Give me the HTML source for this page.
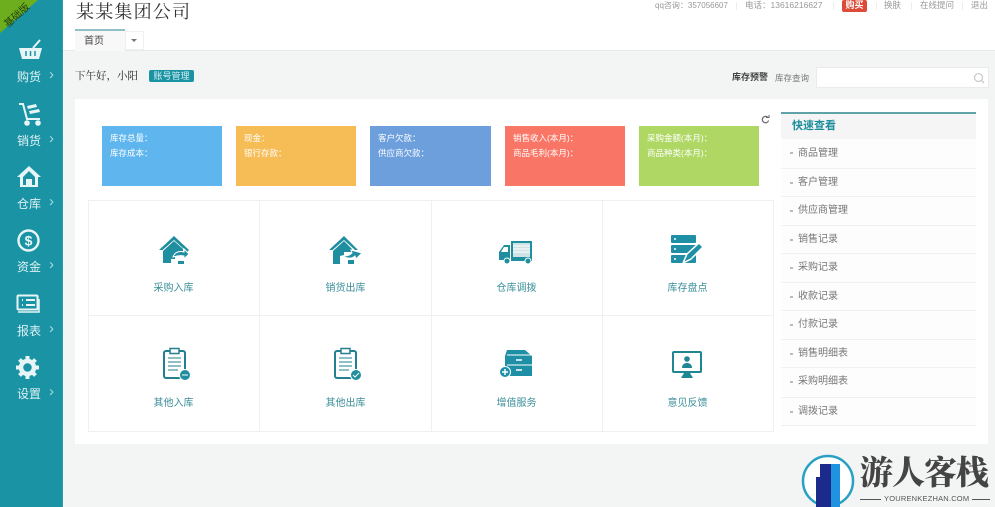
<!DOCTYPE html>
<html><head><meta charset="utf-8"><style>
*{box-sizing:border-box}
html,body{margin:0;padding:0}
body{width:995px;height:507px;position:relative;overflow:hidden;background:#f3f4f4;font-family:"Liberation Sans","Noto Sans CJK SC",sans-serif;font-size:10px;color:#666}
.a{position:absolute;white-space:nowrap}
#side{left:0;top:0;width:63px;height:507px;background:#1a94a5;border-right:1px solid #2a9cae}
.nav{color:#dff1f4;font-size:12px;left:0;width:63px}
.nav b{position:absolute;left:17px;top:-1px;font-weight:normal}
.nav i{position:absolute;left:49px;top:-3px;font-style:normal;font-size:15px;color:#a9d9df}
.card{position:absolute;top:126px;height:60px;color:#fff;font-size:8.5px;line-height:15px;padding:5px 0 0 8px}
.ln{position:absolute;background:#f0f0f0}
.lbl{position:absolute;width:171px;text-align:center;font-size:10px;color:#3a8e99}
.q{position:absolute;left:781px;width:195px;height:29px;border-top:1px solid #f1f1f1;background:#fdfdfd;color:#777;font-size:10px;line-height:28px;padding-left:17px}
.q:before{content:"";position:absolute;left:9px;top:13px;width:3px;height:2px;background:#bbb}
svg{position:absolute;overflow:visible}
</style></head><body>
<div class="a" style="left:0;top:0;width:995px;height:51px;background:#fff;border-bottom:1px solid #e8e8e8"></div>
<div class="a" style="left:75px;top:99px;width:913px;height:345px;background:#fff"></div>

<div class="a" id="side"></div>
<svg style="left:0;top:0" width="40" height="36"><polygon points="0,0 38,0 0,33" fill="#6cae1e"/></svg>
<div class="a" style="left:1px;top:7px;font-size:10px;color:#24400a;transform:rotate(-42deg)">基础版</div>

<svg style="left:18px;top:39px" width="26" height="22" fill="#e8f5f7"><path d="M1 9h23l-3 11H4z"/><path d="M15 9l7-8" stroke="#e8f5f7" stroke-width="2" fill="none"/><path d="M8 12v5M12.500 12v5M17 12v5" stroke="#1a94a5" stroke-width="1.500"/></svg>
<div class="a nav" style="top:69px"><b>购货</b><i>›</i></div>
<svg style="left:17px;top:102px" width="26" height="24" fill="none" stroke="#e8f5f7" stroke-width="2"><path d="M2 2h4l4 15h13"/><circle cx="10" cy="21" r="1.800" fill="#e8f5f7"/><circle cx="21" cy="21" r="1.800" fill="#e8f5f7"/><path d="M10 4l9-2 1 3-9 2zM12 9l10-2 1 3-10 2z" fill="#e8f5f7" stroke="none"/></svg>
<div class="a nav" style="top:133px"><b>销货</b><i>›</i></div>
<svg style="left:17px;top:165px" width="24" height="22" fill="#e8f5f7"><path d="M12 1L0 12h3v10h18V12h3z"/><path d="M12 6l-6 6v8h3v-6h6v6h3v-8z" fill="#1a94a5"/><rect x="9" y="14" width="6" height="6"/></svg>
<div class="a nav" style="top:196px"><b>仓库</b><i>›</i></div>
<svg style="left:17px;top:229px" width="24" height="24"><circle cx="11.500" cy="11.500" r="10" fill="none" stroke="#e8f5f7" stroke-width="2.400"/><text x="11.500" y="16.500" text-anchor="middle" font-size="14" font-weight="bold" fill="#e8f5f7" font-family="Liberation Sans">$</text></svg>
<div class="a nav" style="top:259px"><b>资金</b><i>›</i></div>
<svg style="left:16px;top:294px" width="25" height="22" fill="none" stroke="#e8f5f7"><rect x="1.500" y="1.500" width="20" height="14" rx="1" stroke-width="2"/><path d="M6 6h1M6 11h1M10 6h9M10 11h9" stroke-width="2"/><path d="M2 18h21V5" stroke-width="1.500"/></svg>
<div class="a nav" style="top:323px"><b>报表</b><i>›</i></div>
<svg style="left:16px;top:356px" width="24" height="24" fill="none" stroke="#e8f5f7"><circle cx="11.500" cy="11.500" r="6.500" stroke-width="4.500"/><path d="M11.500 0v4M11.500 19v4M0 11.500h4M19 11.500h4M3.500 3.500l3 3M16.500 16.500l3 3M19.500 3.500l-3 3M6.500 16.500l-3 3" stroke-width="4"/></svg>
<div class="a nav" style="top:386px"><b>设置</b><i>›</i></div>

<div class="a" style="left:76px;top:1px;font-size:18px;line-height:22px;letter-spacing:1.200px;color:#333;font-family:'Liberation Serif','Noto Serif CJK SC',serif">某某集团公司</div>
<div class="a" style="left:75px;top:29px;width:50px;height:22px;background:#f8f8f8;border-top:2px solid #8fc0c8;color:#444;font-size:10px;line-height:21px;padding-left:9px">首页</div>
<div class="a" style="left:125px;top:31px;width:19px;height:19px;background:#fff;border:1px solid #f0f0f0"></div>
<svg style="left:131px;top:39px" width="7" height="4"><path d="M0 0h6L3 3z" fill="#777"/></svg>

<div class="a" style="left:655px;top:0;font-size:8px;line-height:11px;color:#999">qq咨询：357056607</div>
<div class="a" style="left:736px;top:2px;width:1px;height:8px;background:#eee"></div>
<div class="a" style="left:745px;top:0;font-size:8.500px;line-height:11px;color:#999">电话：13616216627</div>
<div class="a" style="left:833px;top:2px;width:1px;height:8px;background:#eee"></div>
<div class="a" style="left:842px;top:0;width:25px;height:12px;background:#dd4a38;border-radius:2px;color:#fff;font-size:9px;line-height:11px;text-align:center;font-weight:bold">购买</div>
<div class="a" style="left:876px;top:2px;width:1px;height:8px;background:#eee"></div>
<div class="a" style="left:884px;top:0;font-size:8.500px;line-height:11px;color:#999">换肤</div>
<div class="a" style="left:911px;top:2px;width:1px;height:8px;background:#eee"></div>
<div class="a" style="left:920px;top:0;font-size:8.500px;line-height:11px;color:#999">在线提问</div>
<div class="a" style="left:962px;top:2px;width:1px;height:8px;background:#eee"></div>
<div class="a" style="left:971px;top:0;font-size:8.500px;line-height:11px;color:#999">退出</div>

<div class="a" style="left:75px;top:70px;font-size:10.500px;line-height:14px;color:#222;font-family:'Liberation Serif','Noto Serif CJK SC',serif">下午好，小阳</div>
<div class="a" style="left:149px;top:70px;width:45px;height:12px;background:#1a94a5;border-radius:2px;color:#d8f0f3;font-size:9px;line-height:12px;text-align:center">账号管理</div>
<div class="a" style="left:732px;top:71px;font-size:9px;line-height:12px;color:#444;font-weight:bold">库存预警</div>
<div class="a" style="left:775px;top:72px;font-size:8.500px;line-height:12px;color:#777">库存查询</div>
<div class="a" style="left:816px;top:67px;width:173px;height:21px;background:#fff;border:1px solid #ebebeb"></div>
<svg style="left:973px;top:72px" width="12" height="12" fill="none" stroke="#ccc" stroke-width="1.300"><circle cx="5.500" cy="5.500" r="4"/><path d="M8.500 8.500l2.500 2.500"/></svg>

<div class="card" style="left:102px;width:120px;background:#5fb5ee">库存总量：<br>库存成本：</div>
<div class="card" style="left:236px;width:120px;background:#f6bc55">现金：<br>银行存款：</div>
<div class="card" style="left:370px;width:121px;background:#6c9fdc">客户欠款：<br>供应商欠款：</div>
<div class="card" style="left:505px;width:120px;background:#f97666">销售收入(本月)：<br>商品毛利(本月)：</div>
<div class="card" style="left:639px;width:120px;background:#aed763">采购金额(本月)：<br>商品种类(本月)：</div>
<svg style="left:761px;top:115px" width="9" height="9" fill="none" stroke="#666" stroke-width="1.200"><path d="M7 2.500A3.200 3.200 0 1 0 7.600 5.500"/><path d="M5 2.500h3V0" stroke-width="1"/></svg>

<div class="ln" style="left:88px;top:200px;width:686px;height:1px"></div>
<div class="ln" style="left:88px;top:315px;width:686px;height:1px"></div>
<div class="ln" style="left:88px;top:431px;width:686px;height:1px"></div>
<div class="ln" style="left:88px;top:200px;width:1px;height:232px"></div>
<div class="ln" style="left:259px;top:200px;width:1px;height:232px"></div>
<div class="ln" style="left:431px;top:200px;width:1px;height:232px"></div>
<div class="ln" style="left:602px;top:200px;width:1px;height:232px"></div>
<div class="ln" style="left:773px;top:200px;width:1px;height:232px"></div>

<svg style="left:158px;top:235px" width="33" height="29"><path d="M16 1L1 15h3.500L16 5l11 10-2 6 6-6z" fill="#1f8f9f"/><path d="M5 16l11-10 9 8v3l-8 1v6h-4v4H5z" fill="#1f8f9f"/><path d="M15 22c2-6 8-6 11-5v-3l5 5-5 5v-3c-4-1-8 0-11 1z" fill="#1f8f9f" stroke="#fff"/><rect x="20" y="26" width="6" height="3" fill="#1f8f9f"/></svg>
<div class="lbl" style="left:88px;top:279px">采购入库</div>
<svg style="left:328px;top:235px" width="35" height="29"><path d="M16 1L1 15h3.500L16 5l11 10h3z" fill="#1f8f9f"/><path d="M5 16l11-10 8 8v3h-8v3l-4 1v8H5z" fill="#1f8f9f"/><path d="M14 21c4 0 7 0 10-3l-1-3 11 3-6 6-1-3c-3 3-7 3-13 0z" fill="#1f8f9f" stroke="#fff"/><rect x="20" y="25" width="6" height="4" fill="#1f8f9f"/></svg>
<div class="lbl" style="left:260px;top:279px">销货出库</div>
<svg style="left:499px;top:238px" width="35" height="26"><path d="M12 3h21v20H12z" fill="#1f8f9f"/><rect x="14" y="5" width="17" height="14" fill="#cfe3e6"/><path d="M14 8h17M14 11h17M14 14h17" stroke="#fff"/><path d="M11 7H5L0 14v8h11z" fill="#1f8f9f"/><path d="M5 9h4v5H2z" fill="#fff"/><circle cx="8" cy="23" r="3" fill="#1f8f9f" stroke="#fff"/><circle cx="29" cy="23" r="3" fill="#1f8f9f" stroke="#fff"/></svg>
<div class="lbl" style="left:431px;top:279px">仓库调拨</div>
<svg style="left:671px;top:235px" width="32" height="29" fill="#1f8fa6"><rect x="0" y="0" width="25" height="8" rx="1"/><rect x="0" y="10" width="25" height="8" rx="1"/><rect x="0" y="20" width="25" height="8" rx="1"/><path d="M12 28l4-9 12-11 4 4-12 12z" fill="#1f8fa6" stroke="#fff" stroke-width="1.500"/><circle cx="4" cy="4" r="1" fill="#fff"/><circle cx="4" cy="14" r="1" fill="#fff"/><circle cx="4" cy="24" r="1" fill="#fff"/></svg>
<div class="lbl" style="left:602px;top:279px">库存盘点</div>

<svg style="left:163px;top:347px" width="29" height="34" fill="none" stroke="#22808f"><rect x="1" y="4" width="21" height="27" rx="2" stroke-width="2"/><rect x="7" y="1.500" width="9" height="5" fill="#fff" stroke-width="1.500"/><path d="M5 11h13M5 15h13M5 19h13M5 23h10"/><circle cx="22" cy="28" r="5.500" fill="#1f8f9f" stroke="#fff"/><path d="M19 28h6" stroke="#fff"/></svg>
<div class="lbl" style="left:88px;top:394px">其他入库</div>
<svg style="left:334px;top:347px" width="29" height="34" fill="none" stroke="#22808f"><rect x="1" y="4" width="21" height="27" rx="2" stroke-width="2"/><rect x="7" y="1.500" width="9" height="5" fill="#fff" stroke-width="1.500"/><path d="M5 11h13M5 15h13M5 19h13M5 23h10"/><circle cx="22" cy="28" r="5.500" fill="#1f8f9f" stroke="#fff"/><path d="M19 28l2 2 4-4" stroke="#fff"/></svg>
<div class="lbl" style="left:260px;top:394px">其他出库</div>
<svg style="left:499px;top:350px" width="35" height="29"><path d="M8 0h18l7 6v20H6V6z" fill="#1f8fa6"/><path d="M8 5h25M8 15h25" stroke="#fff"/><path d="M17 10h6M17 20h6" stroke="#fff" stroke-width="1.500"/><circle cx="6" cy="22" r="5.500" fill="#1f8fa6" stroke="#fff"/><path d="M3 22h6M6 19v6" stroke="#fff" stroke-width="1.500"/></svg>
<div class="lbl" style="left:431px;top:394px">增值服务</div>
<svg style="left:672px;top:351px" width="31" height="27"><rect x="1" y="1" width="28" height="20" rx="1" fill="#fff" stroke="#1f8793" stroke-width="2"/><circle cx="15" cy="8" r="2.800" fill="#1f8793"/><path d="M10 17c0-4 3-5 5-5s5 1 5 5z" fill="#1f8793"/><path d="M9 27l3-5h6l3 5z" fill="#1f8793"/></svg>
<div class="lbl" style="left:602px;top:394px">意见反馈</div>

<div class="a" style="left:781px;top:112px;width:195px;height:2px;background:#5fa3a8"></div>
<div class="a" style="left:781px;top:114px;width:195px;height:25px;background:#f5f5f5;color:#1d8d9d;font-size:11px;font-weight:bold;line-height:24px;padding-left:11px">快速查看</div>
<div class="q" style="top:139px;border-top:0;line-height:30px">商品管理</div>
<div class="q" style="top:168px">客户管理</div>
<div class="q" style="top:196px">供应商管理</div>
<div class="q" style="top:225px">销售记录</div>
<div class="q" style="top:253px">采购记录</div>
<div class="q" style="top:282px">收款记录</div>
<div class="q" style="top:310px">付款记录</div>
<div class="q" style="top:339px">销售明细表</div>
<div class="q" style="top:367px">采购明细表</div>
<div class="q" style="top:397px;border-bottom:1px solid #f1f1f1">调拨记录</div>

<svg style="left:802px;top:455px" width="53" height="52"><circle cx="26" cy="26" r="25" fill="#fff" stroke="#2aa0c4" stroke-width="2.500"/><rect x="18" y="9" width="11" height="43" fill="#1c2a8c"/><rect x="14" y="22" width="6" height="30" fill="#1c2a8c"/><rect x="29" y="9" width="9" height="43" fill="#1f93e0"/></svg>
<div class="a" style="left:860px;top:453px;font-size:33px;line-height:42px;font-weight:900;letter-spacing:-1px;color:#444;font-family:'Liberation Serif','Noto Serif CJK SC',serif">游人客栈</div>
<div class="a" style="left:860px;top:499px;width:130px;height:1px;background:#555"></div>
<div class="a" style="left:881px;top:493px;padding:0 3px;background:#f3f4f4;font-size:7.500px;line-height:12px;color:#555;letter-spacing:.2px">YOURENKEZHAN.COM</div>
</body></html>
